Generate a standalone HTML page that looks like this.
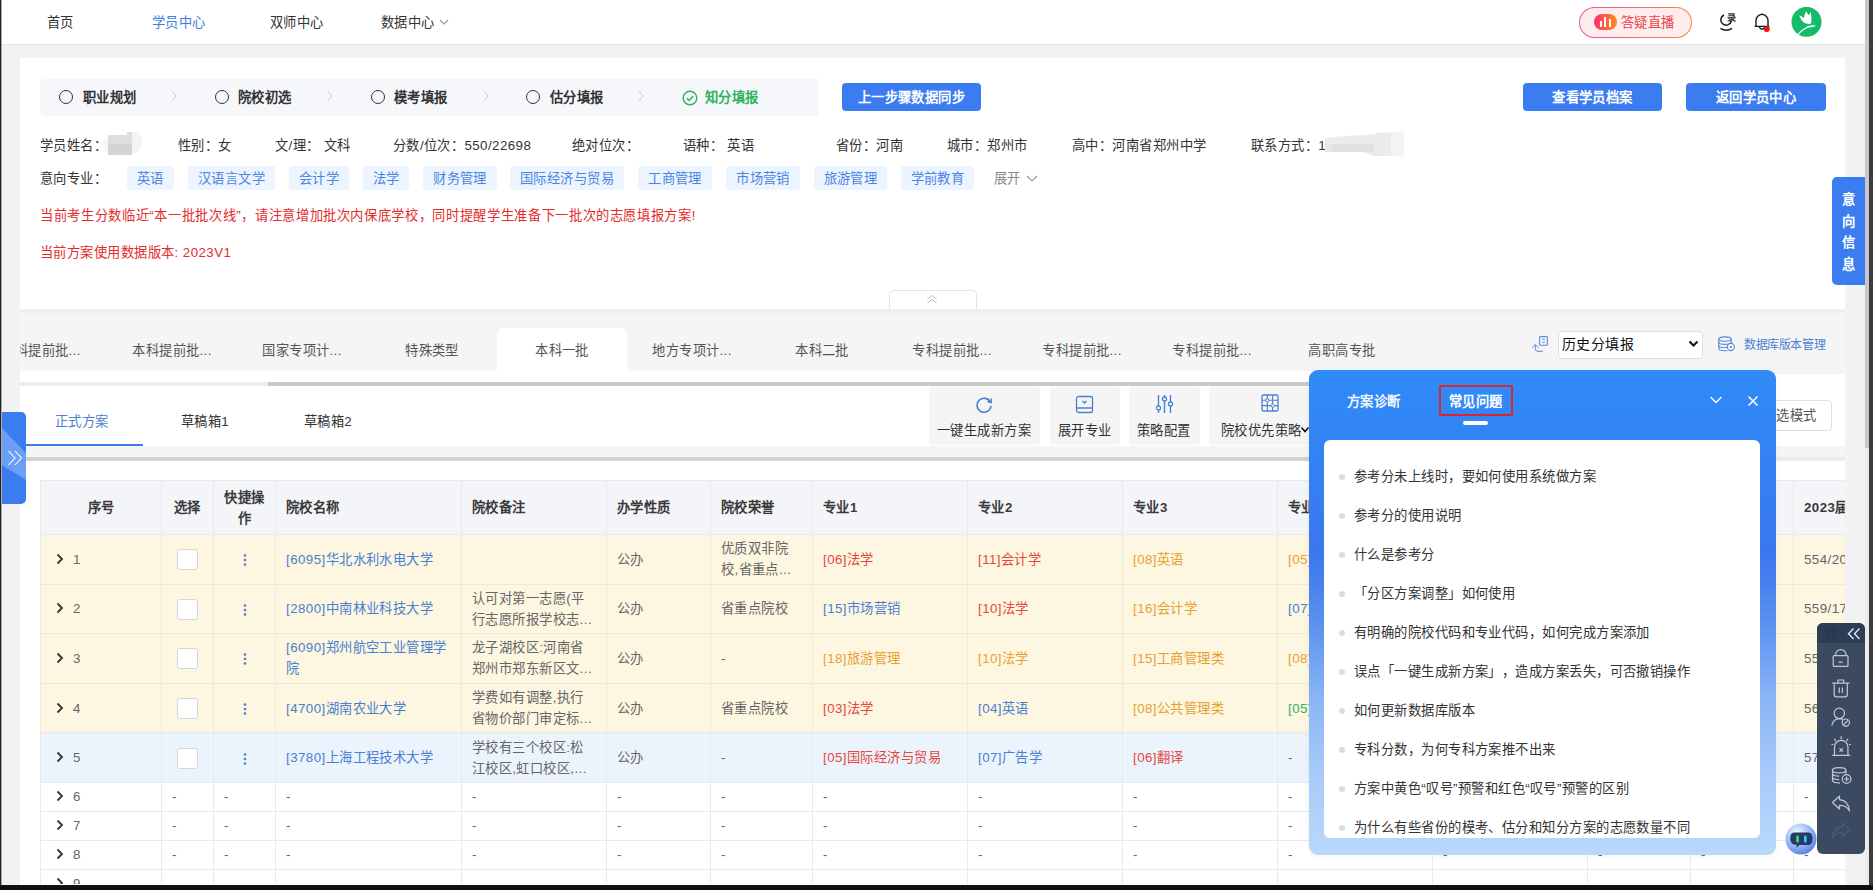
<!DOCTYPE html>
<html lang="zh-CN"><head><meta charset="utf-8">
<style>
*{box-sizing:border-box;margin:0;padding:0}
html,body{width:1873px;height:890px;overflow:hidden;background:#f2f2f2;font-family:"Liberation Sans",sans-serif;font-size:13.3px;color:#333;letter-spacing:.45px;text-spacing-trim:space-all}
.a{position:absolute;white-space:nowrap}
.nav{left:0;top:0;width:1866px;height:45px;background:#fff;border-bottom:1px solid #e6e6e6}
.nav .t{top:15px;font-size:13.3px;color:#333;line-height:16px}
.card{left:20px;top:58px;width:1825px;height:251px;background:#fff}
.steps{left:40px;top:79px;width:778px;height:37px;background:#f5f7fa;border-radius:5px 0 0 5px}
.st{top:91px;font-weight:bold;color:#333;line-height:14px}
.circ{width:14px;height:14px;border:1.3px solid #333;border-radius:50%}
.arr{top:89px}
.btn{height:28px;background:#3b7cf0;color:#fff;border-radius:4px;text-align:center;line-height:29px;font-weight:bold}
.info{top:139px;color:#333;line-height:14px}
.tag{top:166px;height:24px;line-height:25px;background:#ecf4ff;color:#4a86e0;border-radius:3px;text-align:center}
.red{color:#e32b2b;line-height:14px}
.tab{top:343px;width:130px;text-align:center;color:#555;line-height:16px}
.tb{top:387px;height:58px;background:#f5f5f5;border-radius:4px}
.tbt{top:423px;color:#333;line-height:16px}
table.g{position:absolute;left:40px;top:480px;border-collapse:collapse;table-layout:fixed;background:#fff}
table.g td,table.g th{border:1px solid #e9eaee;padding:0 10px;text-align:left;white-space:nowrap;overflow:hidden;font-size:13.3px;line-height:21px}
table.g th{background:#f4f5f8;font-weight:bold;color:#3a3a3a;height:54px}
table.g tr.y td{background:#fdf6e1;border-color:#efe9d7;height:49.6px;color:#666}
table.g tr.b td{background:#ebf3fd;height:49.6px;color:#666}
table.g tr.e td{height:29px;color:#666}
.bl{color:#4a80d0}.rd{color:#e5473f}.or{color:#e8a033}.gr{color:#2fb35a}
.chk{display:inline-block;width:21px;height:21px;border:1px solid #d6d6d6;border-radius:3px;background:#fff;vertical-align:middle}
.q{left:1354px;color:#333;line-height:16px}
.dot{left:1339px;width:6px;height:6px;border-radius:50%;background:#dcdcdc}
</style></head><body>

<!-- NAV -->
<div class="a nav">
  <div class="a t" style="left:47px">首页</div>
  <div class="a t" style="left:152px;color:#3b7de0">学员中心</div>
  <div class="a t" style="left:270px">双师中心</div>
  <div class="a t" style="left:381px">数据中心</div>
  <svg class="a" style="left:439px;top:18px" width="10" height="8" viewBox="0 0 10 8"><path d="M1 2 L5 6 L9 2" fill="none" stroke="#999" stroke-width="1.1"/></svg>
  <!-- live pill -->
  <div class="a" style="left:1579px;top:7px;width:113px;height:31px;border-radius:16px;background:linear-gradient(90deg,#e64fb0,#f08a3a);padding:1px">
    <div style="width:100%;height:100%;border-radius:15px;background:#ffeded"></div>
  </div>
  <div class="a" style="left:1594px;top:14px;width:23px;height:16px;border-radius:8px;background:linear-gradient(90deg,#ff2e6c,#ff8a1c)"></div>
  <div class="a" style="left:1600px;top:21px;width:2px;height:5.5px;background:#fff"></div>
  <div class="a" style="left:1604px;top:17px;width:2.2px;height:9.5px;background:#fff"></div>
  <div class="a" style="left:1608.5px;top:19px;width:2px;height:7.5px;background:#fff"></div>
  <div class="a" style="left:1621px;top:15px;color:#e8434b;line-height:16px;font-weight:500">答疑直播</div>
  <!-- mic icon -->
  <svg class="a" style="left:1718px;top:10px" width="22" height="24" viewBox="0 0 22 24"><path d="M6 5 A5.3 5.3 0 1 0 13.3 11" fill="none" stroke="#1a1a1a" stroke-width="1.5"/><path d="M2.4 18.3 Q8.2 22.2 14 18.3" fill="none" stroke="#1a1a1a" stroke-width="1.5"/><text x="9.3" y="10.8" font-size="9" fill="#333" font-weight="bold" style="font-family:sans-serif">录</text></svg>
  <!-- bell -->
  <svg class="a" style="left:1753px;top:12px" width="18" height="22" viewBox="0 0 18 22"><path d="M3 14.4 V8.4 A6 6 0 0 1 15 8.4 V14.4 M1.6 14.4 H16.2 M9 1.3 V2.4" fill="none" stroke="#1a1a1a" stroke-width="1.4" stroke-linejoin="round"/><path d="M6.2 15.2 Q9 19.2 11.8 15.2" fill="none" stroke="#1a1a1a" stroke-width="1.4"/><circle cx="13.8" cy="17" r="3" fill="#f01010"/></svg>
  <!-- avatar -->
  <svg class="a" style="left:1791px;top:7px" width="31" height="30" viewBox="0 0 31 30"><circle cx="15.5" cy="14.8" r="15" fill="#14bb68"/><path d="M8.2 8.6 Q10 13.5 13 15.8 Q16.8 17.6 20.2 16.5 Q20.8 10.5 19.8 5 L17.6 8.2 L15 4 Q13.6 7.8 12.8 11.2 Q10.6 8.8 8.2 8.6 Z" fill="#fff"/><path d="M6.8 27.6 Q12.5 20.8 19.6 19.3" fill="none" stroke="#fff" stroke-width="1.2"/><path d="M15.5 19.6 Q20 17.8 25 18.4 Q22 20.8 17.5 20.2 Z" fill="#fff"/></svg>
</div>

<!-- CARD -->
<div class="a card"></div>
<div class="a steps"></div>
<div class="a circ" style="left:59px;top:90px"></div><div class="a st" style="left:83px">职业规划</div>
<div class="a circ" style="left:215px;top:90px"></div><div class="a st" style="left:238px">院校初选</div>
<div class="a circ" style="left:371px;top:90px"></div><div class="a st" style="left:394px">模考填报</div>
<div class="a circ" style="left:526px;top:90px"></div><div class="a st" style="left:550px">估分填报</div>
<svg class="a arr" style="left:170px" width="8" height="14" viewBox="0 0 8 14"><path d="M1.5 2 L6 7 L1.5 12" fill="none" stroke="#c8ccd4" stroke-width="1"/></svg>
<svg class="a arr" style="left:326px" width="8" height="14" viewBox="0 0 8 14"><path d="M1.5 2 L6 7 L1.5 12" fill="none" stroke="#c8ccd4" stroke-width="1"/></svg>
<svg class="a arr" style="left:482px" width="8" height="14" viewBox="0 0 8 14"><path d="M1.5 2 L6 7 L1.5 12" fill="none" stroke="#c8ccd4" stroke-width="1"/></svg>
<svg class="a arr" style="left:637px" width="8" height="14" viewBox="0 0 8 14"><path d="M1.5 2 L6 7 L1.5 12" fill="none" stroke="#c8ccd4" stroke-width="1"/></svg>
<svg class="a" style="left:682px;top:90px" width="16" height="16" viewBox="0 0 16 16"><circle cx="8" cy="8" r="6.8" fill="none" stroke="#2eb35f" stroke-width="1.4"/><path d="M4.8 8.2 L7.2 10.5 L11.3 6" fill="none" stroke="#2eb35f" stroke-width="1.4"/></svg>
<div class="a st" style="left:705px;color:#2eb35f">知分填报</div>

<div class="a btn" style="left:842px;top:83px;width:139px">上一步骤数据同步</div>
<div class="a btn" style="left:1523px;top:83px;width:139px">查看学员档案</div>
<div class="a btn" style="left:1686px;top:83px;width:140px">返回学员中心</div>

<div class="a info" style="left:40px">学员姓名：</div>
<svg class="a" style="left:100px;top:130px" width="45" height="28" viewBox="0 0 45 28"><polygon points="1,14 8,6 8,25" fill="#f7f7f7"/><polygon points="32,2 38,2 42,8 42,14 38,22 32,25" fill="#f3f3f3"/><rect x="8" y="5" width="24" height="9" fill="#dedede"/><rect x="27" y="2" width="5" height="3" fill="#dedede"/><rect x="8" y="14" width="24" height="11" fill="#d4d4d4"/></svg>
<div class="a info" style="left:178px">性别：女</div>
<div class="a info" style="left:275px">文/理：&nbsp;文科</div>
<div class="a info" style="left:393px">分数/位次：550/22698</div>
<div class="a info" style="left:572px">绝对位次：</div>
<div class="a info" style="left:683px">语种：&nbsp;英语</div>
<div class="a info" style="left:836px">省份：河南</div>
<div class="a info" style="left:947px">城市：郑州市</div>
<div class="a info" style="left:1072px">高中：河南省郑州中学</div>
<div class="a info" style="left:1251px">联系方式：1</div>
<svg class="a" style="left:1325px;top:131px" width="80" height="26" viewBox="0 0 80 26"><polygon points="0,7 20,5 40,4 48,3 57,1.5 66,1.5 66,25 48,25 44,23 37,21 0,21" fill="#ebebeb"/><rect x="66" y="0.5" width="13" height="24.5" fill="#f4f4f4"/><rect x="7" y="13.5" width="42" height="7.5" fill="#e0e0e0"/><rect x="0" y="13" width="7" height="8" fill="#e8e8e8"/></svg>

<div class="a info" style="left:40px;top:172px">意向专业：</div>
<div class="a tag" style="left:127px;width:47px">英语</div>
<div class="a tag" style="left:188px;width:87px">汉语言文学</div>
<div class="a tag" style="left:289px;width:60px">会计学</div>
<div class="a tag" style="left:363px;width:46px">法学</div>
<div class="a tag" style="left:423px;width:74px">财务管理</div>
<div class="a tag" style="left:510px;width:114px">国际经济与贸易</div>
<div class="a tag" style="left:638px;width:74px">工商管理</div>
<div class="a tag" style="left:726px;width:74px">市场营销</div>
<div class="a tag" style="left:814px;width:73px">旅游管理</div>
<div class="a tag" style="left:901px;width:73px">学前教育</div>
<div class="a info" style="left:994px;top:172px;color:#888">展开</div>
<svg class="a" style="left:1025px;top:173px" width="14" height="10" viewBox="0 0 14 10"><path d="M2 3 L7 8 L12 3" fill="none" stroke="#999" stroke-width="1.1"/></svg>

<div class="a red" style="left:40px;top:209px;letter-spacing:.65px">当前考生分数临近“本一批批次线”，请注意增加批次内保底学校，同时提醒学生准备下一批次的志愿填报方案!</div>
<div class="a red" style="left:40px;top:246px">当前方案使用数据版本: 2023V1</div>

<!-- collapse tab -->
<div class="a" style="left:889px;top:290px;width:88px;height:20px;background:#fff;border:1px solid #e4e4e4;border-bottom:none;border-radius:5px 5px 0 0"></div>
<svg class="a" style="left:926px;top:294px" width="12" height="10" viewBox="0 0 12 10"><path d="M1.5 5 L6 1.5 L10.5 5 M1.5 9 L6 5.5 L10.5 9" fill="none" stroke="#bbb" stroke-width="1"/></svg>

<!-- side tab right 意向信息 -->
<div class="a" style="left:1832px;top:177px;width:34px;height:108px;background:#3b7cf0;border-radius:5px 0 0 5px;color:#fff;font-size:13.3px;font-weight:bold;line-height:21.5px;text-align:center;white-space:normal;padding-top:12px">意<br>向<br>信<br>息</div>

<!-- TABS ROW -->
<div class="a" style="left:20px;top:309px;width:1825px;height:4px;background:#efefef"></div>
<div class="a" style="left:20px;top:313px;width:1825px;height:58px;background:#f5f5f5;overflow:hidden">
  <div class="a tab" style="left:-44px;top:30px">本科提前批...</div>
  <div class="a tab" style="left:87px;top:30px">本科提前批...</div>
  <div class="a tab" style="left:217px;top:30px">国家专项计...</div>
  <div class="a tab" style="left:347px;top:30px">特殊类型</div>
  <div class="a" style="left:477px;top:15px;width:130px;height:43px;background:#fff;border-radius:6px 6px 0 0"></div>
  <div class="a tab" style="left:477px;top:30px">本科一批</div>
  <div class="a tab" style="left:607px;top:30px">地方专项计...</div>
  <div class="a tab" style="left:737px;top:30px">本科二批</div>
  <div class="a tab" style="left:867px;top:30px">专科提前批...</div>
  <div class="a tab" style="left:997px;top:30px">专科提前批...</div>
  <div class="a tab" style="left:1127px;top:30px">专科提前批...</div>
  <div class="a tab" style="left:1257px;top:30px">高职高专批</div>
</div>
<div class="a" style="left:1500px;top:313px;width:345px;height:61px;background:#f5f5f5"></div>
<svg class="a" style="left:1532px;top:335px" width="18" height="18" viewBox="0 0 18 18"><rect x="7.6" y="1.6" width="7.8" height="8.6" rx="1" fill="none" stroke="#5a8ad8" stroke-width="1.1"/><path d="M10 4.4 H13 M10 7.3 H13" stroke="#5a8ad8" stroke-width="0.9"/><path d="M0.3 12.8 L3.3 9.6 L6.5 12.8 M3.3 9.8 V13.8 Q3.3 16.3 6 16.3 H11" fill="none" stroke="#5a8ad8" stroke-width="1"/></svg>
<div class="a" style="left:1558px;top:331px;width:145px;height:28px;background:#fff;border:1px solid #dcdfe6;border-radius:4px"></div>
<div class="a" style="left:1562px;top:336px;color:#111;line-height:16px;font-size:14px">历史分填报</div>
<svg class="a" style="left:1688px;top:340px" width="11" height="8" viewBox="0 0 11 8"><path d="M1.5 1.5 L5.5 5.5 L9.5 1.5" fill="none" stroke="#111" stroke-width="2"/></svg>
<svg class="a" style="left:1718px;top:336px" width="18" height="16" viewBox="0 0 18 16"><ellipse cx="7" cy="3.1" rx="6.2" ry="2.2" fill="none" stroke="#5a8ad8" stroke-width="1.1"/><path d="M0.8 3.1 V12.6 Q0.8 14.8 7 14.8 H9.5 M13.2 3.1 V8.5" fill="none" stroke="#5a8ad8" stroke-width="1.1"/><path d="M0.8 6.3 Q0.8 8.4 7 8.4 Q13.2 8.4 13.2 6.3 M0.8 9.4 Q0.8 11.5 7 11.5 H9" fill="none" stroke="#5a8ad8" stroke-width="1.1"/><circle cx="12.9" cy="11" r="3.6" fill="#f5f5f5" stroke="#5a8ad8" stroke-width="1.1"/><circle cx="12.9" cy="11" r="1.1" fill="#5a8ad8"/></svg>
<div class="a" style="left:1744px;top:338px;color:#4a80d0;font-size:12px;line-height:14px;letter-spacing:-.4px">数据库版本管理</div>

<!-- white strip + scrollbar -->
<div class="a" style="left:20px;top:371px;width:1825px;height:15px;background:#fff"></div>
<div class="a" style="left:1500px;top:371px;width:345px;height:3px;background:#f5f5f5"></div>
<div class="a" style="left:20px;top:382px;width:1480px;height:4px;background:#ececec"></div>
<div class="a" style="left:268px;top:382px;width:1232px;height:4px;background:#c9c9c9"></div>

<!-- subtabs -->
<div class="a" style="left:20px;top:386px;width:1825px;height:60px;background:#fff"></div>
<div class="a" style="left:55px;top:414px;color:#4a80d0;line-height:16px">正式方案</div>
<div class="a" style="left:181px;top:414px;color:#333;line-height:16px">草稿箱1</div>
<div class="a" style="left:304px;top:414px;color:#333;line-height:16px">草稿箱2</div>
<div class="a" style="left:20px;top:444px;width:123px;height:2px;background:#3b7cf0"></div>
<div class="a tb" style="left:929px;width:111px"></div>
<div class="a tb" style="left:1050px;width:70px"></div>
<div class="a tb" style="left:1129px;width:71px"></div>
<div class="a tb" style="left:1209px;width:110px"></div>
<svg class="a" style="left:975px;top:395px" width="19" height="19" viewBox="0 0 19 19"><path d="M15.5 7.5 A7 7 0 1 0 16 11" fill="none" stroke="#4a80d0" stroke-width="1.6"/><path d="M12.5 6.5 L16 7.5 L16.3 3.5" fill="none" stroke="#4a80d0" stroke-width="1.6"/></svg>
<div class="a tbt" style="left:937px">一键生成新方案</div>
<svg class="a" style="left:1075px;top:395px" width="19" height="19" viewBox="0 0 19 19"><rect x="1.5" y="1.5" width="16" height="16" rx="2" fill="none" stroke="#4a80d0" stroke-width="1.3"/><path d="M1.5 13 H17.5 M7.5 6 L9.5 8 L11.5 6" fill="none" stroke="#4a80d0" stroke-width="1.3"/></svg>
<div class="a tbt" style="left:1058px">展开专业</div>
<svg class="a" style="left:1155px;top:394px" width="19" height="20" viewBox="0 0 19 20"><path d="M3.5 1 V19 M9.5 1 V19 M15.5 1 V19" stroke="#4a80d0" stroke-width="1.4"/><circle cx="3.5" cy="14" r="2" fill="#fff" stroke="#4a80d0" stroke-width="1.3"/><circle cx="9.5" cy="5" r="2" fill="#fff" stroke="#4a80d0" stroke-width="1.3"/><circle cx="15.5" cy="10" r="2" fill="#fff" stroke="#4a80d0" stroke-width="1.3"/></svg>
<div class="a tbt" style="left:1137px">策略配置</div>
<svg class="a" style="left:1261px;top:394px" width="18" height="18" viewBox="0 0 18 18"><rect x="1" y="1" width="16" height="16" rx="1.5" fill="none" stroke="#4a80d0" stroke-width="1.3"/><path d="M1 6.3 H17 M1 11.6 H17 M6.3 1 V17 M11.6 1 V17" stroke="#4a80d0" stroke-width="1.1"/><circle cx="6.3" cy="6.3" r="1.6" fill="#fff" stroke="#4a80d0" stroke-width="1"/><circle cx="11.6" cy="11.6" r="1.6" fill="#fff" stroke="#4a80d0" stroke-width="1"/></svg>
<div class="a tbt" style="left:1221px">院校优先策略</div>
<svg class="a" style="left:1300px;top:426px" width="10" height="8" viewBox="0 0 10 8"><path d="M1.5 1.5 L5 5.5 L8.5 1.5" fill="none" stroke="#111" stroke-width="1.6"/></svg>
<div class="a" style="left:1770px;top:400px;width:62px;height:31px;border:1px solid #dcdfe6;border-radius:4px;background:#fff"></div>
<div class="a" style="left:1763px;top:408px;color:#555;line-height:16px">筛选模式</div>

<div class="a" style="left:20px;top:446px;width:1825px;height:11px;background:#f5f5f5"></div>
<div class="a" style="left:20px;top:457px;width:1825px;height:4px;background:linear-gradient(90deg,#d2d2d2 0,#d2d2d2 1400px,#ebebeb 1750px)"></div>
<div class="a" style="left:20px;top:461px;width:1825px;height:430px;background:#fff"></div>

<!--TSTART--><div class="a" style="left:40px;top:480px;width:1805px;height:404px;overflow:hidden">
<table class="g" style="left:0;top:0;width:1873px">
<colgroup><col style="width:121px"><col style="width:52px"><col style="width:62px"><col style="width:186px"><col style="width:145px"><col style="width:104px"><col style="width:102px"><col style="width:155px"><col style="width:155px"><col style="width:155px"><col style="width:155px"><col style="width:155px"><col style="width:103px"><col style="width:103px"><col style="width:120px"></colgroup>
<tr><th style="text-align:center">序号</th><th style="text-align:center">选择</th><th style="text-align:center">快捷操<br>作</th><th>院校名称</th><th>院校备注</th><th>办学性质</th><th>院校荣誉</th><th>专业1</th><th>专业2</th><th>专业3</th><th>专业4</th><th>专业5</th><th>专业6</th><th>2022届</th><th>2023届最低分</th></tr>
<tr class="y"><td style="padding-left:15px"><svg width="8" height="12" viewBox="0 0 8 12" style="vertical-align:-1px;margin-right:9px"><path d="M1.5 1.5 L6 6 L1.5 10.5" fill="none" stroke="#333" stroke-width="1.8"/></svg>1</td><td style="text-align:center"><span class="chk"></span></td><td style="text-align:center"><svg width="4" height="14" viewBox="0 0 4 14" style="vertical-align:middle"><circle cx="2" cy="2.5" r="1.3" fill="#4a80d0"/><circle cx="2" cy="7" r="1.3" fill="#4a80d0"/><circle cx="2" cy="11.5" r="1.3" fill="#4a80d0"/></svg></td><td><span class="bl">[6095]华北水利水电大学</span></td><td></td><td>公办</td><td>优质双非院<br>校,省重点...</td><td><span class="rd">[06]法学</span></td><td><span class="rd">[11]会计学</span></td><td><span class="or">[08]英语</span></td><td><span class="or">[05]商务英语</span></td><td>-</td><td>-</td><td>-</td><td>554/20586</td></tr>
<tr class="y"><td style="padding-left:15px"><svg width="8" height="12" viewBox="0 0 8 12" style="vertical-align:-1px;margin-right:9px"><path d="M1.5 1.5 L6 6 L1.5 10.5" fill="none" stroke="#333" stroke-width="1.8"/></svg>2</td><td style="text-align:center"><span class="chk"></span></td><td style="text-align:center"><svg width="4" height="14" viewBox="0 0 4 14" style="vertical-align:middle"><circle cx="2" cy="2.5" r="1.3" fill="#4a80d0"/><circle cx="2" cy="7" r="1.3" fill="#4a80d0"/><circle cx="2" cy="11.5" r="1.3" fill="#4a80d0"/></svg></td><td><span class="bl">[2800]中南林业科技大学</span></td><td>认可对第一志愿(平<br>行志愿所报学校志...</td><td>公办</td><td>省重点院校</td><td><span class="bl">[15]市场营销</span></td><td><span class="rd">[10]法学</span></td><td><span class="or">[16]会计学</span></td><td><span class="bl">[07]财务管理</span></td><td>-</td><td>-</td><td>-</td><td>559/17325</td></tr>
<tr class="y"><td style="padding-left:15px"><svg width="8" height="12" viewBox="0 0 8 12" style="vertical-align:-1px;margin-right:9px"><path d="M1.5 1.5 L6 6 L1.5 10.5" fill="none" stroke="#333" stroke-width="1.8"/></svg>3</td><td style="text-align:center"><span class="chk"></span></td><td style="text-align:center"><svg width="4" height="14" viewBox="0 0 4 14" style="vertical-align:middle"><circle cx="2" cy="2.5" r="1.3" fill="#4a80d0"/><circle cx="2" cy="7" r="1.3" fill="#4a80d0"/><circle cx="2" cy="11.5" r="1.3" fill="#4a80d0"/></svg></td><td><span class="bl">[6090]郑州航空工业管理学<br>院</span></td><td>龙子湖校区:河南省<br>郑州市郑东新区文...</td><td>公办</td><td>-</td><td><span class="or">[18]旅游管理</span></td><td><span class="or">[10]法学</span></td><td><span class="or">[15]工商管理类</span></td><td><span class="or">[08]英语</span></td><td>-</td><td>-</td><td>-</td><td>558/18000</td></tr>
<tr class="y"><td style="padding-left:15px"><svg width="8" height="12" viewBox="0 0 8 12" style="vertical-align:-1px;margin-right:9px"><path d="M1.5 1.5 L6 6 L1.5 10.5" fill="none" stroke="#333" stroke-width="1.8"/></svg>4</td><td style="text-align:center"><span class="chk"></span></td><td style="text-align:center"><svg width="4" height="14" viewBox="0 0 4 14" style="vertical-align:middle"><circle cx="2" cy="2.5" r="1.3" fill="#4a80d0"/><circle cx="2" cy="7" r="1.3" fill="#4a80d0"/><circle cx="2" cy="11.5" r="1.3" fill="#4a80d0"/></svg></td><td><span class="bl">[4700]湖南农业大学</span></td><td>学费如有调整,执行<br>省物价部门审定标...</td><td>公办</td><td>省重点院校</td><td><span class="rd">[03]法学</span></td><td><span class="bl">[04]英语</span></td><td><span class="or">[08]公共管理类</span></td><td><span class="gr">[05]会计学</span></td><td>-</td><td>-</td><td>-</td><td>561/16000</td></tr>
<tr class="b"><td style="padding-left:15px"><svg width="8" height="12" viewBox="0 0 8 12" style="vertical-align:-1px;margin-right:9px"><path d="M1.5 1.5 L6 6 L1.5 10.5" fill="none" stroke="#333" stroke-width="1.8"/></svg>5</td><td style="text-align:center"><span class="chk"></span></td><td style="text-align:center"><svg width="4" height="14" viewBox="0 0 4 14" style="vertical-align:middle"><circle cx="2" cy="2.5" r="1.3" fill="#4a80d0"/><circle cx="2" cy="7" r="1.3" fill="#4a80d0"/><circle cx="2" cy="11.5" r="1.3" fill="#4a80d0"/></svg></td><td><span class="bl">[3780]上海工程技术大学</span></td><td>学校有三个校区:松<br>江校区,虹口校区,...</td><td>公办</td><td>-</td><td><span class="rd">[05]国际经济与贸易</span></td><td><span class="bl">[07]广告学</span></td><td><span class="rd">[06]翻译</span></td><td>-</td><td>-</td><td>-</td><td>-</td><td>570/15000</td></tr>
<tr class="e"><td style="padding-left:15px"><svg width="8" height="12" viewBox="0 0 8 12" style="vertical-align:-1px;margin-right:9px"><path d="M1.5 1.5 L6 6 L1.5 10.5" fill="none" stroke="#333" stroke-width="1.8"/></svg>6</td><td>-</td><td>-</td><td>-</td><td>-</td><td>-</td><td>-</td><td>-</td><td>-</td><td>-</td><td>-</td><td>-</td><td>-</td><td>-</td><td>-</td></tr>
<tr class="e"><td style="padding-left:15px"><svg width="8" height="12" viewBox="0 0 8 12" style="vertical-align:-1px;margin-right:9px"><path d="M1.5 1.5 L6 6 L1.5 10.5" fill="none" stroke="#333" stroke-width="1.8"/></svg>7</td><td>-</td><td>-</td><td>-</td><td>-</td><td>-</td><td>-</td><td>-</td><td>-</td><td>-</td><td>-</td><td>-</td><td>-</td><td>-</td><td>-</td></tr>
<tr class="e"><td style="padding-left:15px"><svg width="8" height="12" viewBox="0 0 8 12" style="vertical-align:-1px;margin-right:9px"><path d="M1.5 1.5 L6 6 L1.5 10.5" fill="none" stroke="#333" stroke-width="1.8"/></svg>8</td><td>-</td><td>-</td><td>-</td><td>-</td><td>-</td><td>-</td><td>-</td><td>-</td><td>-</td><td>-</td><td>-</td><td>-</td><td>-</td><td>-</td></tr>
<tr class="e"><td style="padding-left:15px"><svg width="8" height="12" viewBox="0 0 8 12" style="vertical-align:-1px;margin-right:9px"><path d="M1.5 1.5 L6 6 L1.5 10.5" fill="none" stroke="#333" stroke-width="1.8"/></svg>9</td><td>-</td><td>-</td><td>-</td><td>-</td><td>-</td><td>-</td><td>-</td><td>-</td><td>-</td><td>-</td><td>-</td><td>-</td><td>-</td><td>-</td></tr>
</table></div><!--TEND-->
<!-- left side blue tab -->
<div class="a" style="left:0;top:412px;width:26px;height:92px;background:#3b7cf0;border-radius:0 5px 5px 0;overflow:hidden"><svg width="26" height="92" viewBox="0 0 26 92" style="display:block"><polygon points="0,14 26,41 26,68 0,52" fill="#6b9ef5"/></svg></div>
<svg class="a" style="left:7px;top:450px" width="17" height="16" viewBox="0 0 17 16"><path d="M1.5 1 L8 8 L1.5 15 M8 1 L14.5 8 L8 15" fill="none" stroke="#fff" stroke-width="1.1"/></svg>

<!-- POPUP -->
<div class="a" style="left:1309px;top:370px;width:467px;height:485px;border-radius:9px;background:linear-gradient(180deg,#2f8bf8 0%,#3580f3 22%,#3b77ee 38%,#5a90f0 52%,#8ab5f6 68%,#a9cbf9 84%,#b9d8fb 100%);box-shadow:0 1px 6px rgba(0,0,0,0.06)"></div>
<div class="a" style="left:1347px;top:394px;color:#fff;font-weight:bold;line-height:16px;opacity:0.92">方案诊断</div>
<div class="a" style="left:1439px;top:385px;width:74px;height:31px;border:2px solid #d8262e;border-radius:2px"></div>
<div class="a" style="left:1449px;top:394px;color:#fff;font-weight:bold;line-height:16px">常见问题</div>
<div class="a" style="left:1463px;top:421px;width:25px;height:4px;border-radius:2px;background:#fff"></div>
<svg class="a" style="left:1709px;top:395px" width="14" height="10" viewBox="0 0 14 10"><path d="M1.5 2 L7 7.5 L12.5 2" fill="none" stroke="#fff" stroke-width="1.4"/></svg>
<svg class="a" style="left:1747px;top:395px" width="12" height="12" viewBox="0 0 12 12"><path d="M1.5 1.5 L10.5 10.5 M10.5 1.5 L1.5 10.5" fill="none" stroke="#fff" stroke-width="1.5"/></svg>
<div class="a" style="left:1324px;top:440px;width:436px;height:398px;background:#fff;border-radius:6px;overflow:hidden">
</div>
<div class="a" style="left:1324px;top:440px;width:436px;height:398px;overflow:hidden">
  <div class="a dot" style="left:15px;top:34px"></div><div class="a q" style="left:30px;top:29px">参考分未上线时，要如何使用系统做方案</div>
  <div class="a dot" style="left:15px;top:73px"></div><div class="a q" style="left:30px;top:68px">参考分的使用说明</div>
  <div class="a dot" style="left:15px;top:112px"></div><div class="a q" style="left:30px;top:107px">什么是参考分</div>
  <div class="a dot" style="left:15px;top:151px"></div><div class="a q" style="left:30px;top:146px">「分区方案调整」如何使用</div>
  <div class="a dot" style="left:15px;top:190px"></div><div class="a q" style="left:30px;top:185px">有明确的院校代码和专业代码，如何完成方案添加</div>
  <div class="a dot" style="left:15px;top:229px"></div><div class="a q" style="left:30px;top:224px">误点「一键生成新方案」，造成方案丢失，可否撤销操作</div>
  <div class="a dot" style="left:15px;top:268px"></div><div class="a q" style="left:30px;top:263px">如何更新数据库版本</div>
  <div class="a dot" style="left:15px;top:307px"></div><div class="a q" style="left:30px;top:302px">专科分数，为何专科方案推不出来</div>
  <div class="a dot" style="left:15px;top:346px"></div><div class="a q" style="left:30px;top:341px">方案中黄色“叹号”预警和红色“叹号”预警的区别</div>
  <div class="a dot" style="left:15px;top:385px"></div><div class="a q" style="left:30px;top:380px">为什么有些省份的模考、估分和知分方案的志愿数量不同</div>
</div>

<!-- right float toolbar -->
<div class="a" style="left:1817px;top:623px;width:48px;height:231px;background:#3b4a60;border-radius:6px;overflow:hidden">
  <div class="a" style="left:0;top:0;width:48px;height:20px;background:#2d3d55"></div>
</div>
<svg class="a" style="left:1817px;top:623px" width="48" height="231" viewBox="0 0 48 231" fill="none" stroke="#c3c9d3" stroke-width="1.2">
  <path d="M9 5 V16 M12.3 5 V16 M15.6 5 V16 M18.9 5 V16" stroke="#26364c" stroke-width="1.1"/>
  <path d="M36.5 5.5 L31.5 10.8 L36.5 16 M42.5 5.5 L37.5 10.8 L42.5 16" stroke="#e2e6ec" stroke-width="1.4"/>
  <!-- lock -->
  <path d="M18.6 32.4 V31.8 A5.2 5.2 0 0 1 29 31.8 V32.4"/><rect x="16.2" y="32.6" width="14.8" height="10.8" rx="1"/><path d="M21.5 39.2 H25.7"/>
  <!-- trash -->
  <path d="M15.2 60.2 H32.3 M21 60.2 V57 H26.6 V60.2"/><path d="M17.2 60.2 V71.5 Q17.2 73.8 19.5 73.8 H28 Q30.3 73.8 30.3 71.5 V60.2"/><path d="M22.3 64.5 V70 M25.4 64.5 V70"/>
  <!-- user -->
  <circle cx="22.3" cy="90.3" r="5.2"/><path d="M14.8 102.5 Q16 95.8 22.3 95.6 Q24.5 95.6 26 96.5"/><circle cx="28.8" cy="99.6" r="3.6"/><path d="M26.7 101.7 L30.9 97.5"/>
  <!-- alarm -->
  <path d="M17.5 132 V124 A6.7 6.7 0 0 1 30.9 124 V132 M15.2 132.3 H33.2 M24.2 113.2 V116.2 M17.3 116 L18.9 117.8 M31.1 116 L29.5 117.8 M14.5 121.5 H16.4 M32 121.5 H33.9"/><path d="M22.4 125.2 L26 128.8 M26 125.2 L22.4 128.8" stroke-width="1.1"/>
  <!-- db -->
  <ellipse cx="22.2" cy="147.2" rx="6.7" ry="2.6"/><path d="M15.5 147.2 V157.3 Q15.5 159.9 22.2 159.9 H23 M28.9 147.2 V150.8 M15.5 150.6 Q15.5 153.2 22.2 153.2 M15.5 154 Q15.5 156.6 22.2 156.6"/><circle cx="29.6" cy="156" r="4.3" fill="#3b4a60"/><path d="M29.6 153.6 V158.4 M27.2 156 H32"/>
  <!-- undo -->
  <path d="M22.5 173 L15.5 179.5 L22.5 186 V182.3 Q29.5 182 32.5 188 Q31.5 177.5 22.5 176.7 Z" stroke-linejoin="round"/>
  <!-- redo -->
  <path d="M25.5 200 L32.5 206.5 L25.5 213 V209.3 Q18.5 209 15.5 215 Q16.5 204.5 25.5 203.7 Z" stroke="#4e5d72" stroke-linejoin="round"/>
</svg>
<!-- robot -->
<svg class="a" style="left:1785px;top:823px" width="32" height="32" viewBox="0 0 32 32">
<defs><radialGradient id="rg" cx="0.38" cy="0.3" r="0.75"><stop offset="0" stop-color="#f2f7ff"/><stop offset="0.45" stop-color="#a9c6f7"/><stop offset="1" stop-color="#4f7ee0"/></radialGradient></defs>
<circle cx="16" cy="16" r="15.5" fill="url(#rg)"/>
<path d="M9 9.5 H23.5 Q27.5 9.5 27.5 15.8 Q27.5 22 23.5 22 H14.5 L11.5 25 L11.8 22 Q5.2 22 5.2 15.8 Q5.2 9.5 9 9.5 Z" fill="#243a68"/>
<rect x="11.2" y="12.5" width="2.6" height="7" rx="1.2" fill="#49d96a"/>
<rect x="19" y="12.5" width="2.6" height="7" rx="1.2" fill="#3ccdf2"/>
</svg>

<!-- frame borders -->
<div class="a" style="left:0;top:0;width:1px;height:890px;background:#222"></div><div class="a" style="left:1px;top:0;width:1px;height:890px;background:#aaa"></div>
<div class="a" style="left:1865px;top:0;width:4px;height:890px;background:#ebebeb"></div>
<div class="a" style="left:1865px;top:0;width:4px;height:448px;background:#c8c8c8"></div>
<div class="a" style="left:1869px;top:0;width:4px;height:890px;background:#3c3c3c"></div>
<div class="a" style="left:0;top:885px;width:1873px;height:5px;background:#111"></div>

</body></html>
